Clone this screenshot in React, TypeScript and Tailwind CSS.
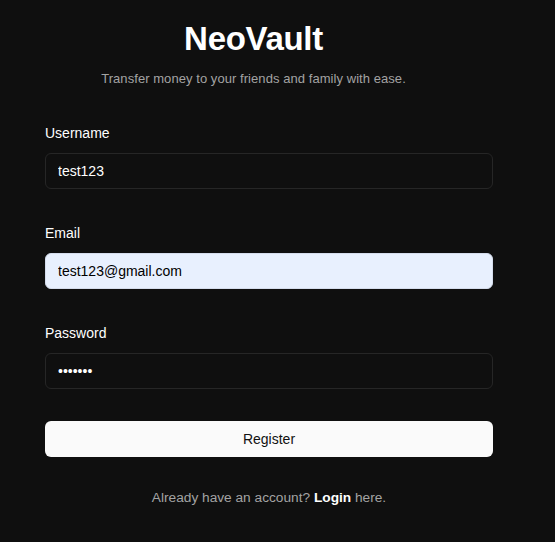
import React from "react";

export default function App() {
  const font = { fontFamily: '"Liberation Sans", Arial, sans-serif' };
  return (
    <div
      className="min-h-[542px] w-full bg-[#0f0f0f] text-white flex flex-col"
      style={font}
    >
      <div className="w-[507px] pt-[19px] flex flex-col items-center text-center">
        <h1 className="text-[33px] leading-[40px] font-bold tracking-[-0.3px]">NeoVault</h1>
        <p className="mt-[10px] text-[13px] leading-5 tracking-[0.06px] text-[#a3a3a3]">
          Transfer money to your friends and family with ease.
        </p>
      </div>

      <form className="mt-[34px] ml-[45px] w-[448px] flex flex-col">
        <div className="flex flex-col gap-[10px]">
          <label className="text-sm leading-5 text-white">Username</label>
          <input
            readOnly
            value="test123"
            className="h-[36px] w-full rounded-[6px] border border-[#262626] bg-[#0f0f0f] px-[12px] text-sm text-white outline-none"
          />
        </div>
        <div className="mt-[34px] flex flex-col gap-[10px]">
          <label className="text-sm leading-5 text-white">Email</label>
          <input
            readOnly
            value="test123@gmail.com"
            className="h-[36px] w-full rounded-[6px] border border-[#d4dcec] bg-[#e8f0fe] px-[12px] text-sm text-black outline-none"
          />
        </div>
        <div className="mt-[34px] flex flex-col gap-[10px]">
          <label className="text-sm leading-5 text-white">Password</label>
          <input
            readOnly
            type="password"
            value="1234567"
            className="h-[36px] w-full rounded-[6px] border border-[#262626] bg-[#0f0f0f] px-[12px] text-sm text-white outline-none"
          />
        </div>
        <button
          type="button"
          className="mt-[32px] h-[36px] w-full rounded-[6px] bg-[#fafafa] text-sm text-[#111]"
        >
          Register
        </button>
        <p className="mt-[31px] text-center text-[13.7px] leading-5 text-[#a3a3a3]">
          Already have an account?{" "}
          <span className="font-semibold text-white">Login</span> here.
        </p>
      </form>
    </div>
  );
}
